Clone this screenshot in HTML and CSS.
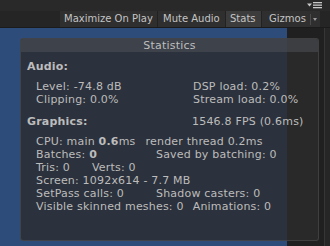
FILE: index.html
```html
<!DOCTYPE html>
<html>
<head>
<meta charset="utf-8">
<link rel="stylesheet" href="styles.css">
</head>
<body>
<div class="topstrip">
  <svg class="menu-icon" width="16" height="8" viewBox="0 0 16 8">
    <path d="M0 2.5 H5 L2.5 5.5 Z" fill="#c8c8c8"/>
    <rect x="6" y="1" width="9" height="1.3" fill="#c8c8c8"/>
    <rect x="6" y="3.5" width="9" height="1.3" fill="#c8c8c8"/>
    <rect x="6" y="6" width="9" height="1.3" fill="#c8c8c8"/>
  </svg>
</div>
<div class="toolbar">
  <div class="tb-buttons">
    <div class="tb-btn btn-max">Maximize On Play</div>
    <div class="tb-btn btn-mute">Mute Audio</div>
    <div class="tb-btn btn-stats active">Stats</div>
    <div class="tb-btn btn-gizmos"><span class="giz-label">Gizmos</span><span class="giz-sep"></span><span class="giz-arrow"></span></div>
  </div>
</div>
<div class="main">
  <div class="view"></div>
  <div class="side"><div class="side-line"></div></div>
  <div class="stats">
    <div class="stats-title">Statistics</div>
    <div class="stats-body">
      <div class="heading">Audio:</div>
      <div class="audio-grid">
        <div class="c1">Level: -74.8 dB</div><div>DSP load: 0.2%</div>
        <div class="c1">Clipping: 0.0%</div><div>Stream load: 0.0%</div>
      </div>
      <div class="gfx-head">
        <div class="heading gh">Graphics:</div>
        <div>1546.8 FPS (0.6ms)</div>
      </div>
      <div class="rows">
        <div class="row gap10"><span>CPU: main <b>0.6</b>ms</span><span>render thread 0.2ms</span></div>
        <div class="row"><span class="w120">Batches: <b>0</b></span><span>Saved by batching: 0</span></div>
        <div class="row"><span class="w56">Tris: 0</span><span>Verts: 0</span></div>
        <div class="row"><span>Screen: 1092x614 - 7.7 MB</span></div>
        <div class="row"><span class="w120">SetPass calls: 0</span><span>Shadow casters: 0</span></div>
        <div class="row gap9"><span>Visible skinned meshes: 0</span><span>Animations: 0</span></div>
      </div>
    </div>
  </div>
</div>
</body>
</html>
```
FILE: styles.css
```css
html, body {
  margin: 0;
  padding: 0;
}
body {
  width: 330px;
  height: 246px;
  overflow: hidden;
  background: #282828;
  font-family: "DejaVu Sans", sans-serif;
  color: #bcbcbc;
}
.topstrip {
  height: 11px;
  display: flex;
  justify-content: flex-end;
  align-items: flex-start;
  padding-right: 7px;
  background: #292929;
}
.menu-icon {
  margin-top: 1px;
}
.toolbar {
  height: 16px;
  background: #252525;
  display: flex;
}
.tb-buttons {
  margin-left: 60px;
  display: flex;
  height: 16px;
}
.tb-btn {
  font-size: 10px;
  line-height: 16px;
  height: 16px;
  background: #2f2f2f;
  color: #c4c4c4;
  border-right: 1px solid #222;
  box-sizing: border-box;
  white-space: nowrap;
}
.btn-max {
  width: 98px;
  padding-left: 4px;
}
.btn-mute {
  width: 68px;
  padding-left: 5px;
}
.btn-stats {
  width: 36px;
  padding-left: 4px;
}
.tb-btn.active {
  background: #3c3c3c;
}
.btn-gizmos {
  width: 58px;
  padding-left: 7px;
  display: flex;
  align-items: center;
  border-right: none;
}
.giz-label {
  width: 41px;
}
.giz-sep {
  width: 1px;
  height: 11px;
  background: #4a4a4a;
}
.giz-arrow {
  margin-left: 2px;
  width: 0;
  height: 0;
  border-left: 2.5px solid transparent;
  border-right: 2.5px solid transparent;
  border-top: 3px solid #9a9a9a;
}
.main {
  position: relative;
  height: 219px;
  border-top: 1px solid #1b1b1b;
  box-sizing: border-box;
  display: flex;
}
.view {
  width: 287px;
  background: #2e4c7a;
}
.side {
  flex: 1;
  background: #202020;
  display: flex;
  justify-content: flex-end;
}
.side-line {
  width: 5px;
  border-left: 1px solid #363636;
  background: #262626;
}
.stats {
  position: absolute;
  left: 20px;
  top: 10px;
  width: 299px;
  height: 203px;
  box-sizing: border-box;
  background: rgba(44, 44, 44, 0.78);
  border: 1px solid rgba(90, 90, 90, 0.45);
  border-radius: 3px;
  font-size: 11px;
  letter-spacing: 0.2px;
  line-height: 13px;
  overflow: hidden;
}
.stats-title {
  height: 13px;
  line-height: 14px;
  text-align: center;
  background: rgba(76, 80, 88, 0.55);
  color: #bebebe;
}
.stats-body {
  padding: 8px 0 0 6px;
}
.heading {
  font-weight: bold;
  color: #bcbcbc;
}
.audio-grid {
  margin-top: 7px;
  margin-left: 9px;
  display: grid;
  grid-template-columns: 157px auto;
}
.gfx-head {
  margin-top: 9px;
  display: flex;
}
.gh {
  width: 165px;
}
.rows {
  margin-top: 7px;
  margin-left: 9px;
}
.row {
  display: flex;
  white-space: nowrap;
}
.gap10 {
  gap: 10px;
}
.gap9 {
  gap: 9px;
}
.w120 {
  width: 120px;
}
.w56 {
  width: 56px;
}
b {
  font-weight: bold;
}
```
